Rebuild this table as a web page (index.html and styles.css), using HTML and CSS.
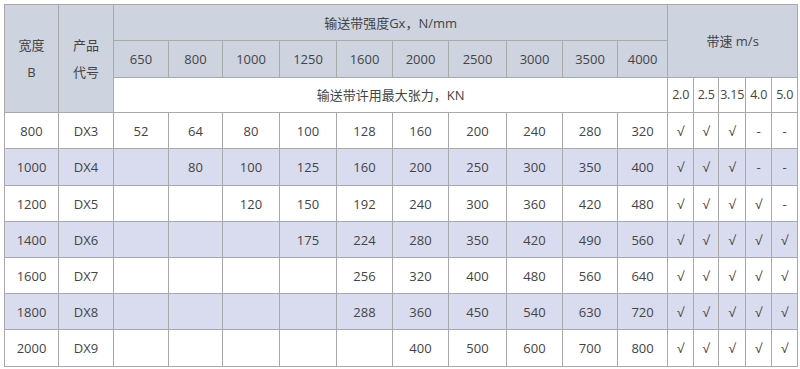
FILE: index.html
```html
<!DOCTYPE html>
<html lang="zh">
<head>
<meta charset="utf-8">
<title>输送带规格表</title>
<link rel="stylesheet" href="styles.css">
</head>
<body>
<table class="spec">
  <colgroup>
    <col class="c54"><col class="c55"><col class="c55"><col class="c54"><col class="c57"><col class="c57"><col class="c56"><col class="c56"><col class="c58"><col class="c56"><col class="c55"><col class="c50"><col class="c26"><col class="c25"><col class="c27"><col class="c26"><col class="c26">
  </colgroup>
  <tr class="h1">
    <td class="hd tall" rowspan="3">宽度<br>B</td>
    <td class="hd tall" rowspan="3">产品<br>代号</td>
    <td class="hd" colspan="10">输送带强度Gx，N/mm</td>
    <td class="hd" colspan="5" rowspan="2">带速 m/s</td>
  </tr>
  <tr class="h2">
    <td class="hd">650</td><td class="hd">800</td><td class="hd">1000</td><td class="hd">1250</td><td class="hd">1600</td><td class="hd">2000</td><td class="hd">2500</td><td class="hd">3000</td><td class="hd">3500</td><td class="hd">4000</td>
  </tr>
  <tr class="h3">
    <td colspan="10">输送带许用最大张力，KN</td>
    <td class="sp">2.0</td><td class="sp">2.5</td><td class="sp">3.15</td><td class="sp">4.0</td><td class="sp">5.0</td>
  </tr>
  <tr class="r1">
    <td>800</td><td>DX3</td><td>52</td><td>64</td><td>80</td><td>100</td><td>128</td><td>160</td><td>200</td><td>240</td><td>280</td><td>320</td><td>√</td><td>√</td><td>√</td><td>-</td><td>-</td>
  </tr>
  <tr class="r2 alt">
    <td>1000</td><td>DX4</td><td></td><td>80</td><td>100</td><td>125</td><td>160</td><td>200</td><td>250</td><td>300</td><td>350</td><td>400</td><td>√</td><td>√</td><td>√</td><td>-</td><td>-</td>
  </tr>
  <tr class="r3">
    <td>1200</td><td>DX5</td><td></td><td></td><td>120</td><td>150</td><td>192</td><td>240</td><td>300</td><td>360</td><td>420</td><td>480</td><td>√</td><td>√</td><td>√</td><td>√</td><td>-</td>
  </tr>
  <tr class="r4 alt">
    <td>1400</td><td>DX6</td><td></td><td></td><td></td><td>175</td><td>224</td><td>280</td><td>350</td><td>420</td><td>490</td><td>560</td><td>√</td><td>√</td><td>√</td><td>√</td><td>√</td>
  </tr>
  <tr class="r5">
    <td>1600</td><td>DX7</td><td></td><td></td><td></td><td></td><td>256</td><td>320</td><td>400</td><td>480</td><td>560</td><td>640</td><td>√</td><td>√</td><td>√</td><td>√</td><td>√</td>
  </tr>
  <tr class="r6 alt">
    <td>1800</td><td>DX8</td><td></td><td></td><td></td><td></td><td>288</td><td>360</td><td>450</td><td>540</td><td>630</td><td>720</td><td>√</td><td>√</td><td>√</td><td>√</td><td>√</td>
  </tr>
  <tr class="r7">
    <td>2000</td><td>DX9</td><td></td><td></td><td></td><td></td><td></td><td>400</td><td>500</td><td>600</td><td>700</td><td>800</td><td>√</td><td>√</td><td>√</td><td>√</td><td>√</td>
  </tr>
</table>
</body>
</html>
```

FILE: styles.css
```css
html, body {
  margin: 0;
  padding: 0;
  background: #ffffff;
}
body {
  padding: 4px 0 0 4px;
  font-family: "Open Sans", "Noto Sans CJK SC", sans-serif;
  font-size: 13px;
  color: #444444;
}
.spec {
  border-collapse: collapse;
  table-layout: fixed;
  width: 794px;
}
.spec td {
  border: 1px solid #a9a9a9;
  text-align: center;
  vertical-align: middle;
  padding: 0;
  line-height: 18px;
  white-space: nowrap;
  overflow: hidden;
}
.spec .hd { background: #cdd3df; }
.spec .tall { line-height: 27px; }
.spec .sp { font-size: 12.5px; letter-spacing: -0.2px; }
.spec .alt td { background: #d9dcef; }
.c54 { width: 54px; }
.c55 { width: 55px; }
.c56 { width: 56px; }
.c57 { width: 57px; }
.c58 { width: 58px; }
.c50 { width: 50px; }
.c25 { width: 25px; }
.c26 { width: 26px; }
.c27 { width: 27px; }
.h1 { height: 36px; }
.h2 { height: 37px; }
.h3 { height: 35px; }
.r1 { height: 36px; }
.r2 { height: 37px; }
.r3 { height: 36px; }
.r4 { height: 36px; }
.r5 { height: 36px; }
.r6 { height: 36px; }
.r7 { height: 37px; }
```
